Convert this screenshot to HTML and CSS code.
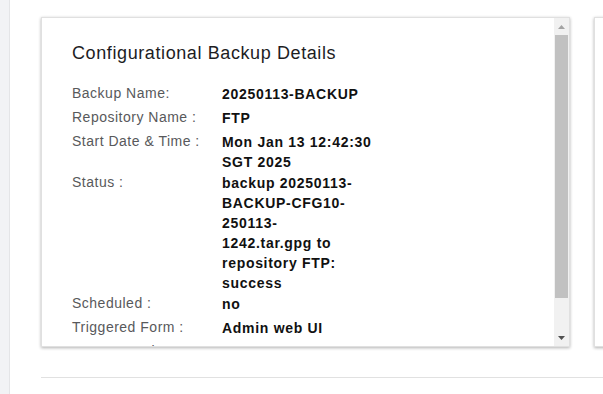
FILE: index.html
```html
<!DOCTYPE html>
<html>
  <head>
    <title>Backup Details</title>
    <link rel="stylesheet" href="styles.css">
  </head>

  <body>
    <div class="layout">
      <div class="sidebar"></div>
      <div class="main">
        <div class="card-row">
          <div class="card">
            <div class="card-body">
              <h2>Configurational Backup Details</h2>
              <div class="details">
                <div class="label">Backup Name:</div>
                <div class="value">20250113-BACKUP</div>

                <div class="label">Repository Name :</div>
                <div class="value">FTP</div>

                <div class="label">Start Date &amp; Time :</div>
                <div class="value">Mon Jan 13 12:42:30 SGT 2025</div>

                <div class="label">Status :</div>
                <div class="value">backup 20250113-<br>BACKUP-CFG10-<br>250113-<br>1242.tar.gpg to<br>repository FTP:<br>success</div>

                <div class="label">Scheduled :</div>
                <div class="value">no</div>

                <div class="label">Triggered Form :</div>
                <div class="value">Admin web UI</div>

                <div class="label">Encrypt Option :</div>
                <div class="value">no</div>
              </div>
            </div>
            <div class="scrollbar">
              <div class="scroll-btn">
                <svg width="7" height="4" viewBox="0 0 7 4"><polygon points="0,4 7,4 3.5,0" fill="#a3a3a3"/></svg>
              </div>
              <div class="scroll-track">
                <div class="scroll-thumb"></div>
              </div>
              <div class="scroll-btn">
                <svg width="7" height="4" viewBox="0 0 7 4"><polygon points="0,0 7,0 3.5,4" fill="#505050"/></svg>
              </div>
            </div>
          </div>
          <div class="card"></div>
        </div>
        <div class="separator"></div>
      </div>
    </div>
  </body>
</html>
```

FILE: styles.css
```css
body {
  font-family: "Liberation Sans", Arial, sans-serif;
  background-color: white;
  margin: 0;
  height: 100vh;
  overflow: hidden;
}

.layout {
  display: flex;
  height: 100%;
}

.sidebar {
  width: 9px;
  flex-shrink: 0;
  background-color: #f2f3f5;
  border-right: 1px solid #e4e5e7;
}

.main {
  flex: 1;
  padding: 17px 0 0 31px;
  overflow: hidden;
}

.card-row {
  display: flex;
  gap: 24px;
}

.card {
  display: flex;
  width: 529px;
  height: 330px;
  flex-shrink: 0;
  box-sizing: border-box;
  background: white;
  border: 1px solid #e0e0e0;
  box-shadow: 0 1px 3px rgba(0, 0, 0, 0.3);
  overflow: hidden;
}

.card-body {
  flex: 1;
  padding: 23px 30px 24px;
  overflow: hidden;
}

h2 {
  margin: 0 0 18px;
  font-size: 18px;
  line-height: 24px;
  font-weight: normal;
  letter-spacing: 0.6px;
  color: #1d1d1f;
}

.details {
  display: grid;
  grid-template-columns: 150px 155px;
  grid-auto-rows: minmax(24px, auto);
}

.label {
  font-size: 14px;
  line-height: 20px;
  letter-spacing: 0.5px;
  color: #58595b;
}

.value {
  font-size: 14px;
  line-height: 20px;
  font-weight: bold;
  letter-spacing: 0.7px;
  color: #111;
  padding-top: 1px;
}

.scrollbar {
  width: 15px;
  flex-shrink: 0;
  display: flex;
  flex-direction: column;
  background: #f1f1f1;
}

.scroll-btn {
  height: 17px;
  display: flex;
  align-items: center;
  justify-content: center;
}

.scroll-track {
  flex: 1;
  padding: 0 1px;
}

.scroll-thumb {
  height: 263px;
  background: #c1c1c1;
}

.separator {
  margin-top: 30px;
  height: 1px;
  background: #e1e1e1;
}
```
